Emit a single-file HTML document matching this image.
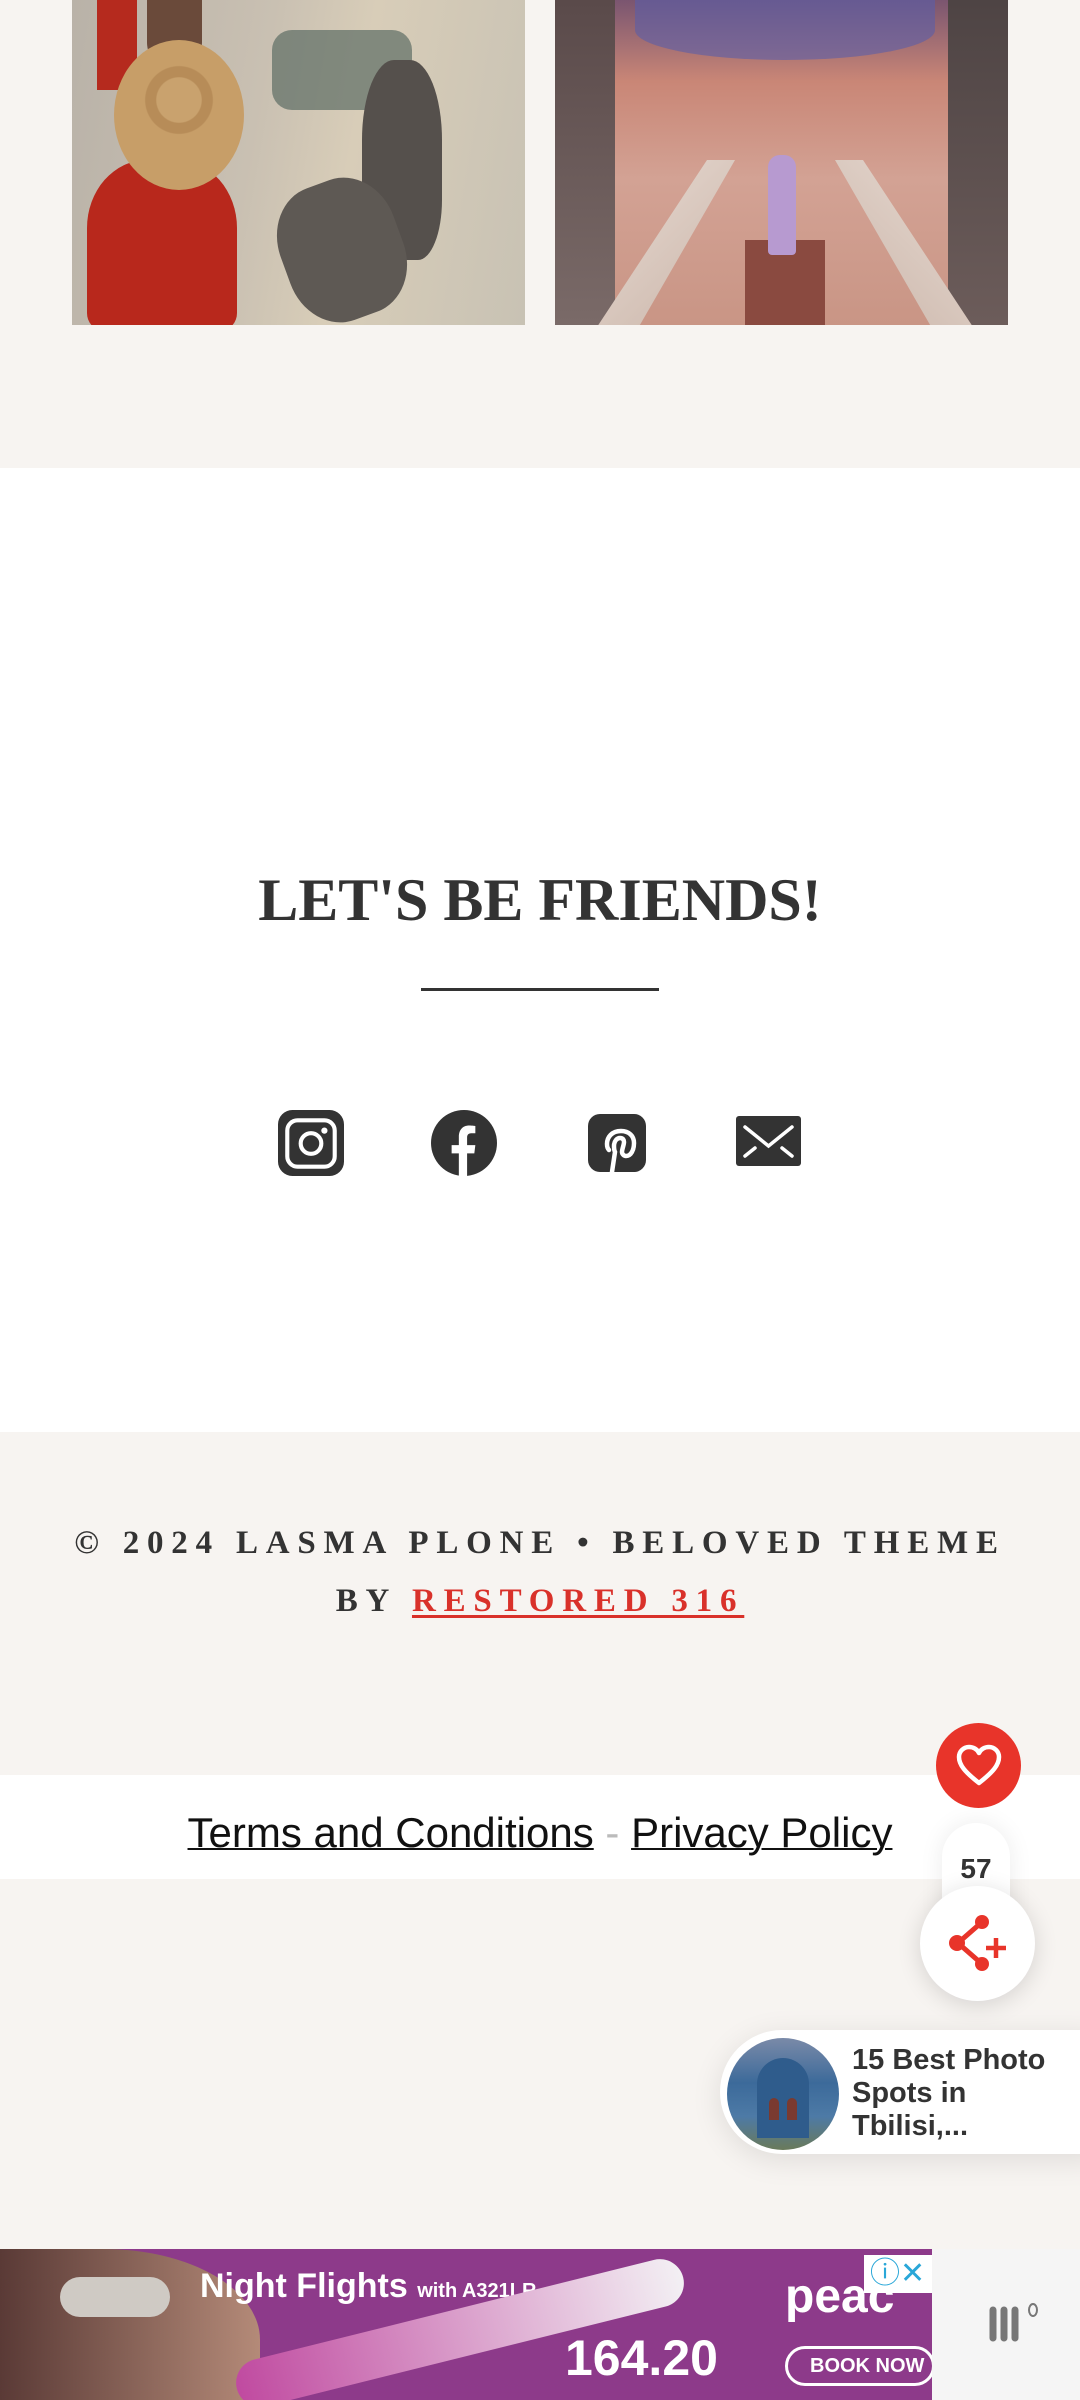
<!DOCTYPE html>
<html><head><meta charset="utf-8">
<style>
*{margin:0;padding:0;box-sizing:border-box}
html,body{width:1080px;height:2400px;overflow:hidden;background:#f7f4f1;font-family:"Liberation Sans",sans-serif}
.abs{position:absolute}
</style></head><body>
<div class="abs" style="left:0;top:0;width:1080px;height:468px;background:#f7f4f1"></div>
<!-- left image -->
<div class="abs" style="left:72px;top:0;width:453px;height:325px;overflow:hidden;background:linear-gradient(100deg,#b9b2a8 0%,#c9c0b2 40%,#d8cdb8 60%,#c8c2b4 100%)">
  <div class="abs" style="left:200px;top:30px;width:140px;height:80px;background:#5c6c64;border-radius:20px;opacity:.7"></div>
  <div class="abs" style="left:290px;top:60px;width:80px;height:200px;background:#55504c;border-radius:40% 40% 30% 30%"></div>
  <div class="abs" style="left:210px;top:180px;width:120px;height:140px;background:#5e5954;border-radius:40%;transform:rotate(-20deg)"></div>
  <div class="abs" style="left:15px;top:160px;width:150px;height:170px;background:#b8281c;border-radius:40% 40% 10% 10%"></div>
  <div class="abs" style="left:25px;top:0px;width:40px;height:90px;background:#b52a1e"></div>
  <div class="abs" style="left:75px;top:0;width:55px;height:70px;background:#6a4a3a;border-radius:0 0 30px 30px"></div>
  <div class="abs" style="left:42px;top:40px;width:130px;height:150px;background:radial-gradient(circle at 50% 40%,#c9a26e 0 20%,#b78c58 21% 30%,#c79e68 31% 100%);border-radius:50%"></div>
</div>
<!-- right image -->
<div class="abs" style="left:555px;top:0;width:453px;height:325px;overflow:hidden;background:linear-gradient(180deg,#7a5570 0%,#c98676 25%,#d3a294 55%,#c99585 100%)">
  <div class="abs" style="left:0;top:0;width:60px;height:325px;background:linear-gradient(#5a4a4a,#7a6a68)"></div>
  <div class="abs" style="left:393px;top:0;width:60px;height:325px;background:linear-gradient(#4e4444,#6c5c5a)"></div>
  <div class="abs" style="left:80px;top:0;width:300px;height:60px;background:#5a5ea8;opacity:.6;border-radius:0 0 50% 50%"></div>
  <div class="abs" style="left:190px;top:240px;width:80px;height:85px;background:#8a4a40"></div>
  <div class="abs" style="left:213px;top:155px;width:28px;height:100px;background:#b79ad0;border-radius:12px 12px 4px 4px"></div>
  <div class="abs" style="left:40px;top:160px;width:140px;height:170px;background:linear-gradient(135deg,#e9dcd4,#c9b4a8);clip-path:polygon(80% 0,100% 0,30% 100%,0 100%)"></div>
  <div class="abs" style="left:280px;top:160px;width:140px;height:170px;background:linear-gradient(225deg,#e9dcd4,#c9b4a8);clip-path:polygon(0 0,20% 0,100% 100%,70% 100%)"></div>
</div>
<!-- white section -->
<div class="abs" style="left:0;top:468px;width:1080px;height:964px;background:#fff"></div>
<div class="abs" style="left:0;top:862px;width:1080px;text-align:center;font-family:'Liberation Serif',serif;font-weight:bold;font-size:60px;color:#333;line-height:76px">LET'S BE FRIENDS!</div>
<div class="abs" style="left:421px;top:988px;width:238px;height:3px;background:#333"></div>
<!-- icons -->
<svg class="abs" style="left:278px;top:1110px" width="66" height="66" viewBox="0 0 64 64">
  <rect x="0" y="0" width="64" height="64" rx="14" fill="#333"/>
  <rect x="9" y="10" width="46" height="45" rx="10" fill="none" stroke="#fff" stroke-width="4"/>
  <circle cx="32" cy="32.5" r="10" fill="none" stroke="#fff" stroke-width="4"/>
  <circle cx="45" cy="20" r="3" fill="#fff"/>
</svg>
<svg class="abs" style="left:431px;top:1110px" width="66" height="66" viewBox="0 0 64 64">
  <circle cx="32" cy="32" r="32" fill="#333"/>
  <path d="M27 64V42h-7v-8h7v-8c0-7 4-11 10-11 3 0 6 .5 6 .5v7h-4c-3 0-4 2-4 4v7.5h8l-1 8h-7V64z" fill="#fff"/>
</svg>
<svg class="abs" style="left:588px;top:1114px" width="58" height="58" viewBox="0 0 58 58">
  <rect width="58" height="58" rx="12" fill="#333"/>
  <path d="M24 58l3-20c-1-2-1-4-1-6 0-5 3-8 6-8 3 0 4 2 4 4 0 3-2 7-2 10 0 2 2 4 4 4 5 0 8-6 8-13 0-7-5-12-13-12-9 0-14 6-14 13 0 3 1 5 2 6" fill="none" stroke="#fff" stroke-width="4.5" stroke-linecap="round"/>
</svg>
<svg class="abs" style="left:736px;top:1116px" width="65" height="50" viewBox="0 0 65 50">
  <rect width="65" height="50" rx="3" fill="#333"/>
  <path d="M9 11l23.5 19L56 11M9 40l10-8M56 40l-10-8" fill="none" stroke="#fff" stroke-width="3.5" stroke-linecap="round"/>
</svg>
<!-- footer copyright -->
<div class="abs" style="left:0;top:1432px;width:1080px;height:343px;background:#f7f4f1"></div>
<div class="abs" style="left:0;top:1514px;width:1080px;text-align:center;font-family:'Liberation Serif',serif;font-weight:bold;font-size:33px;letter-spacing:7.8px;color:#333;line-height:58px">© 2024 LASMA PLONE • BELOVED THEME<br>BY <span style="color:#d9312a;text-decoration:underline;text-decoration-thickness:3px;text-underline-offset:4px">RESTORED 316</span></div>
<!-- terms -->
<div class="abs" style="left:0;top:1775px;width:1080px;height:104px;background:#fff"></div>
<div class="abs" style="left:0;top:1808px;width:1080px;text-align:center;font-size:42px;color:#111;line-height:50px"><span style="text-decoration:underline;text-decoration-thickness:2px">Terms and Conditions</span> <span style="color:#bbb">-</span> <span style="text-decoration:underline;text-decoration-thickness:2px">Privacy Policy</span></div>
<!-- floating buttons -->
<div class="abs" style="left:936px;top:1723px;width:85px;height:85px;border-radius:50%;background:#e8342a"></div>
<svg class="abs" style="left:955px;top:1743px" width="48" height="44" viewBox="0 0 48 44"><path d="M24 40C10 29 4 22 4 14 4 8 9 4 14 4c4 0 8 2 10 6 2-4 6-6 10-6 5 0 10 4 10 10 0 8-6 15-20 26z" fill="none" stroke="#fff" stroke-width="4.5" stroke-linejoin="round"/></svg>
<div class="abs" style="left:942px;top:1823px;width:68px;height:120px;border-radius:34px;background:#fff;box-shadow:0 0 24px rgba(0,0,0,.08)"></div>
<div class="abs" style="left:942px;top:1853px;width:68px;text-align:center;font-weight:bold;font-size:28px;color:#333">57</div>
<div class="abs" style="left:920px;top:1886px;width:115px;height:115px;border-radius:50%;background:#fff;box-shadow:0 4px 24px rgba(0,0,0,.14)"></div>
<svg class="abs" style="left:944px;top:1908px" width="70" height="70" viewBox="0 0 70 70">
  <path d="M38 14L14 35l24 21" fill="none" stroke="#e8342a" stroke-width="5"/>
  <circle cx="38" cy="14" r="7" fill="#e8342a"/><circle cx="13" cy="35" r="8" fill="#e8342a"/><circle cx="38" cy="56" r="7" fill="#e8342a"/>
  <path d="M52 30v20M42 40h20" stroke="#e8342a" stroke-width="4.5"/>
</svg>
<!-- related popup -->
<div class="abs" style="left:720px;top:2030px;width:380px;height:124px;border-radius:62px 0 0 62px;background:#fff;box-shadow:0 6px 30px rgba(0,0,0,.10)"></div>
<div class="abs" style="left:727px;top:2038px;width:112px;height:112px;border-radius:50%;overflow:hidden;background:linear-gradient(180deg,#7a8aa8 0%,#3c6a9a 40%,#4d7aa6 70%,#6a7a5a 100%)">
  <div class="abs" style="left:30px;top:20px;width:52px;height:80px;background:#2f5c8c;border-radius:26px 26px 0 0"></div>
  <div class="abs" style="left:42px;top:60px;width:10px;height:22px;background:#7a3a30;border-radius:5px 5px 0 0"></div>
  <div class="abs" style="left:60px;top:60px;width:10px;height:22px;background:#7a3a30;border-radius:5px 5px 0 0"></div>
</div>
<div class="abs" style="left:852px;top:2044px;width:230px;font-weight:bold;font-size:29px;line-height:33px;color:#333">15 Best Photo Spots in Tbilisi,...</div>
<!-- ad -->
<div class="abs" style="left:0;top:2249px;width:932px;height:151px;background:#8d3a8a;overflow:hidden">
  <div class="abs" style="left:0;top:0;width:260px;height:151px;background:linear-gradient(90deg,#5a3a36,#b48a78);border-radius:0 60% 0 0"></div>
  <div class="abs" style="left:60px;top:28px;width:110px;height:40px;background:#cfcac4;border-radius:20px"></div>
  <div class="abs" style="left:200px;top:18px;font-weight:bold;font-size:34px;color:#fff">Night Flights <span style="font-size:20px">with A321LR</span></div>
  <div class="abs" style="left:230px;top:60px;width:460px;height:48px;background:linear-gradient(90deg,#c04aa0,#f3f0f4);transform:rotate(-14deg);border-radius:24px"></div>
  <div class="abs" style="left:565px;top:80px;font-weight:bold;font-size:50px;color:#fff">164.20</div>
  <div class="abs" style="left:785px;top:20px;font-weight:bold;font-size:48px;color:#fff">peac</div>
  <div class="abs" style="left:785px;top:97px;width:150px;height:40px;border:3px solid #fff;border-radius:20px;color:#fff;font-weight:bold;font-size:20px;line-height:34px;padding-left:22px">BOOK NOW</div>
  <div class="abs" style="left:864px;top:6px;width:68px;height:38px;background:#fff;color:#2aa7d8;font-size:30px;line-height:38px;padding-left:6px">ⓘ✕</div>
</div>
<div class="abs" style="left:932px;top:2249px;width:148px;height:151px;background:#f5f5f5"></div>
<svg class="abs" style="left:988px;top:2300px" width="60" height="50" viewBox="0 0 60 50">
  <path d="M5 10v28M16 10v28M27 10v28" stroke="#777" stroke-width="7" stroke-linecap="round"/>
  <ellipse cx="45" cy="10" rx="4" ry="6" fill="none" stroke="#777" stroke-width="2"/>
</svg>
</body></html>
